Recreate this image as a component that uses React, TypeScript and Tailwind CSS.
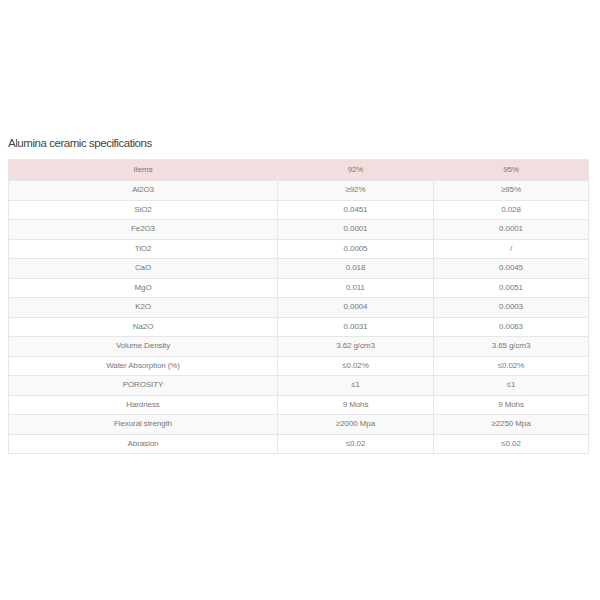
const rows: [string, string, string][] = [
  ["Al2O3", "≥92%", "≥95%"],
  ["SiO2", "0.0451", "0.028"],
  ["Fe2O3", "0.0001", "0.0001"],
  ["TiO2", "0.0005", "/"],
  ["CaO", "0.018", "0.0045"],
  ["MgO", "0.011", "0.0051"],
  ["K2O", "0.0004", "0.0003"],
  ["Na2O", "0.0031", "0.0063"],
  ["Volume Density", "3.62 g/cm3", "3.65 g/cm3"],
  ["Water Absorption (%)", "≤0.02%", "≤0.02%"],
  ["POROSITY", "≤1", "≤1"],
  ["Hardness", "9 Mohs", "9 Mohs"],
  ["Flexural strength", "≥2000 Mpa", "≥2250 Mpa"],
  ["Abrasion", "≤0.02", "≤0.02"],
];

export default function App() {
  return (
    <div className="w-[600px] h-[600px] bg-white" style={{ fontFamily: '"Liberation Sans", Arial, sans-serif' }}>
      <div className="pt-[135px] px-[8px] w-[588px]">
        <div className="text-[11.5px] tracking-[-0.45px] leading-[16px] text-[#444] mb-[8px]">Alumina ceramic specifications</div>
        <table className="w-[580px] border-collapse table-fixed text-[8px] tracking-[-0.1px] text-[#777]">
          <colgroup>
            <col className="w-[269px]" />
            <col className="w-[156px]" />
            <col className="w-[155px]" />
          </colgroup>
          <thead>
            <tr className="bg-[#f2dede] h-[21px]">
              <th className="font-normal text-center border border-[#e6e6e6]">Items</th>
              <th className="font-normal text-center border border-[#e6e6e6]">92%</th>
              <th className="font-normal text-center border border-[#e6e6e6]">95%</th>
            </tr>
          </thead>
          <tbody>
            {rows.map((r, i) => (
              <tr key={i} className={(i % 2 === 0 ? "bg-[#f9f9f9] " : "bg-white ") + "h-[19.5px]"}>
                {r.map((c, j) => (
                  <td key={j} className="text-center border border-[#e6e6e6] p-0">{c}</td>
                ))}
              </tr>
            ))}
          </tbody>
        </table>
      </div>
    </div>
  );
}
